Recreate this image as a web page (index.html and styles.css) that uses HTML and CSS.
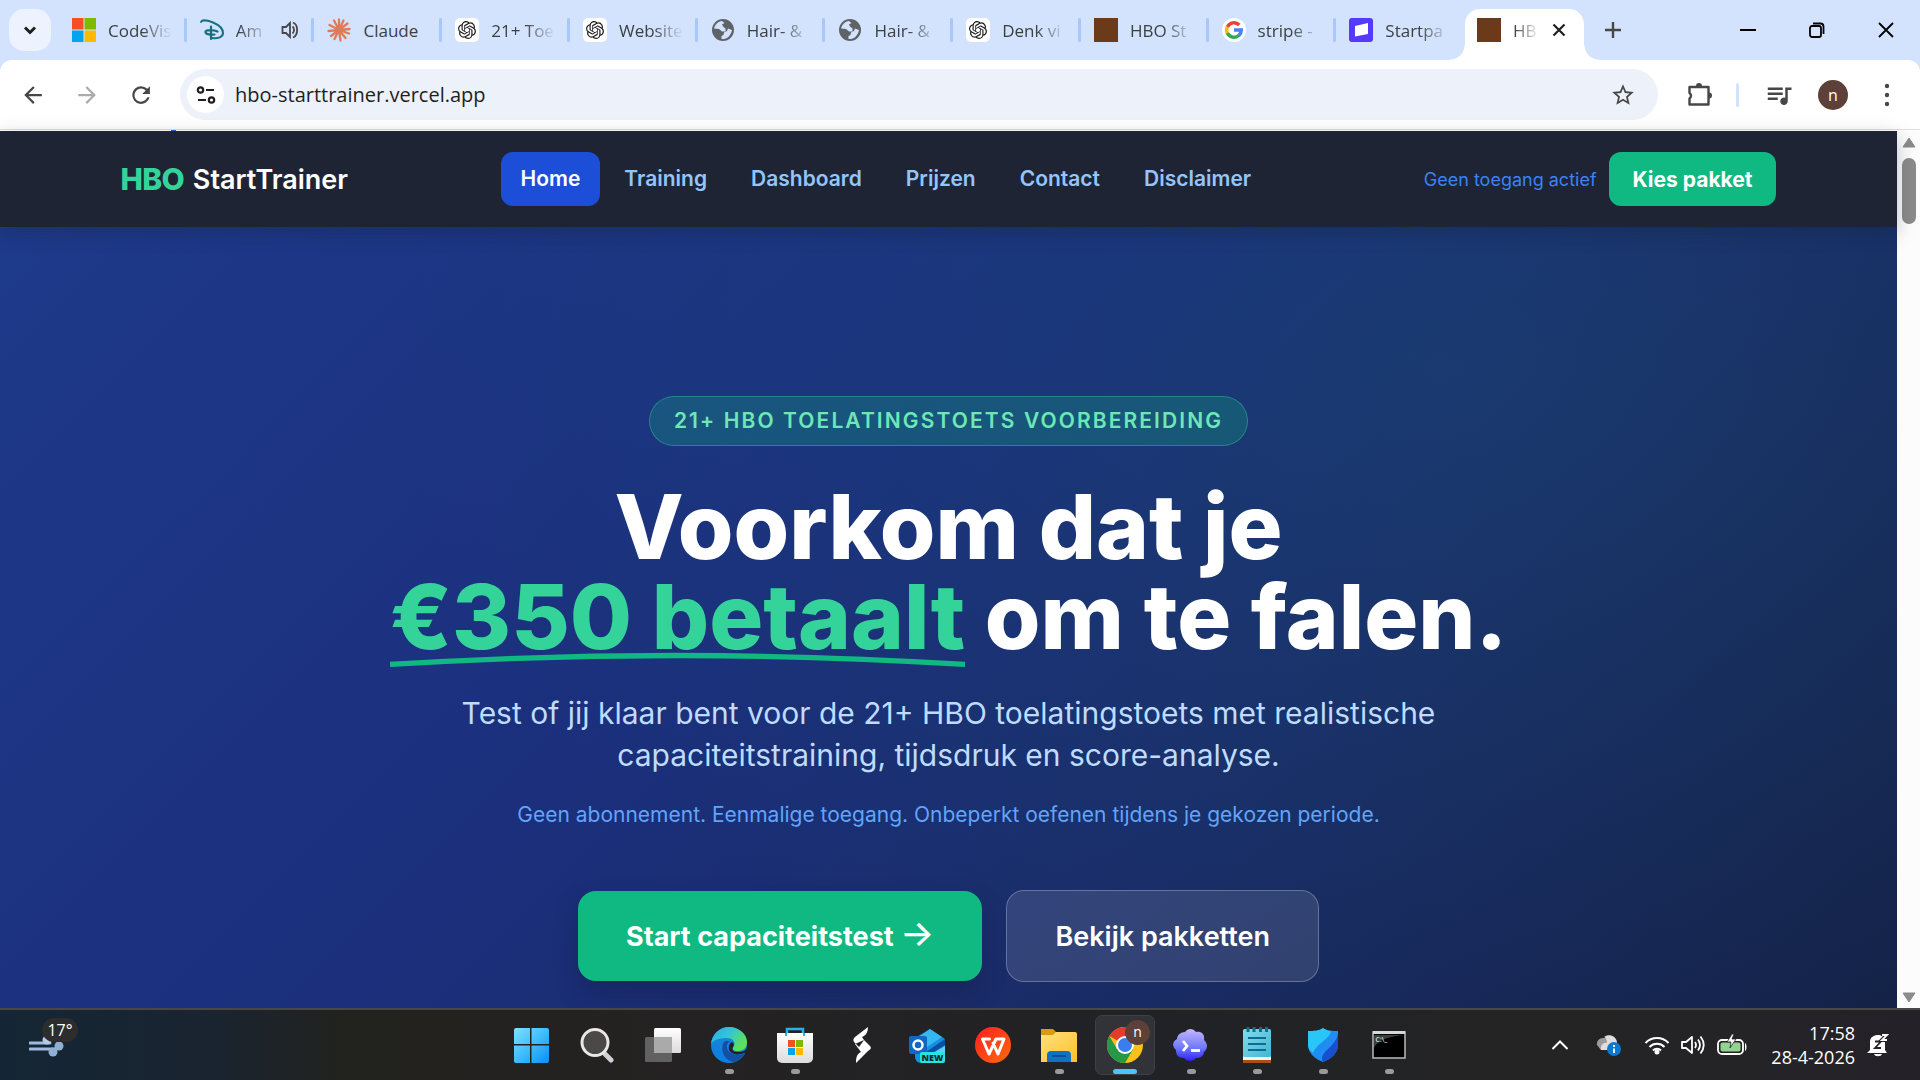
FILE: index.html
```html
<!DOCTYPE html>
<html lang="nl">
<head>
<meta charset="utf-8">
<title>HBO StartTrainer</title>
<link rel="stylesheet" href="styles.css">
</head>
<body>
<svg class="defs" width="0" height="0" aria-hidden="true">
  <defs>
    <symbol id="knot" viewBox="0 0 24 24"><path d="M22.28 9.82a5.98 5.98 0 0 0-.52-4.91 6.05 6.05 0 0 0-6.51-2.9A6.07 6.07 0 0 0 4.98 4.18a5.98 5.98 0 0 0-4 2.9 6.05 6.05 0 0 0 .74 7.1 5.98 5.98 0 0 0 .51 4.91 6.05 6.05 0 0 0 6.51 2.9A5.98 5.98 0 0 0 13.26 24a6.06 6.06 0 0 0 5.77-4.21 5.99 5.99 0 0 0 4-2.9 6.06 6.06 0 0 0-.75-7.07zm-9.02 12.61a4.48 4.48 0 0 1-2.88-1.04l.14-.08 4.78-2.76a.79.79 0 0 0 .39-.68v-6.74l2.02 1.17a.07.07 0 0 1 .04.05v5.58a4.5 4.5 0 0 1-4.49 4.5zM3.6 18.3a4.47 4.47 0 0 1-.53-3.01l.14.08 4.78 2.76a.77.77 0 0 0 .78 0l5.84-3.37v2.33a.08.08 0 0 1-.03.06L9.74 19.95a4.5 4.5 0 0 1-6.14-1.65zM2.34 7.9a4.49 4.49 0 0 1 2.37-1.98v5.68a.77.77 0 0 0 .39.68l5.81 3.35-2.02 1.17a.08.08 0 0 1-.07 0l-4.83-2.79A4.5 4.5 0 0 1 2.34 7.87zm16.6 3.86L13.1 8.36l2.02-1.16a.08.08 0 0 1 .07 0l4.83 2.79a4.49 4.49 0 0 1-.68 8.1v-5.68a.79.79 0 0 0-.4-.65zm2.01-3.02-.14-.09-4.77-2.78a.78.78 0 0 0-.79 0L9.41 9.23V6.9a.07.07 0 0 1 .03-.06l4.83-2.79a4.5 4.5 0 0 1 6.68 4.66zM8.31 12.86l-2.02-1.16a.08.08 0 0 1-.04-.06V6.07a4.5 4.5 0 0 1 7.38-3.45l-.14.08-4.78 2.76a.79.79 0 0 0-.39.68zm1.1-2.36 2.6-1.5 2.6 1.5v3l-2.6 1.5-2.6-1.5z"/></symbol>
    <symbol id="globe" viewBox="0 0 24 24"><circle cx="12" cy="12" r="11" fill="#5f6368"/><path fill="#d3e3fd" d="M11 3C7 3.400 4 6.500 3.100 10.500L8 11l3 2.500h3.500v-3L12 8.500l-1-2 2.500-1.500zM21 12l-4-1.500-1 2.500-3 1.500-.500 2.500-2 1v3c5 .500 9.500-3 10.500-9z"/></symbol>
    <linearGradient id="gWin" x1="0" y1="0" x2="1" y2="1"><stop offset="0" stop-color="#7fe0ff"/><stop offset=".5" stop-color="#3fbdfb"/><stop offset="1" stop-color="#0b8ff5"/></linearGradient>
    <linearGradient id="gEdge" x1="0" y1="0" x2="1" y2=".5"><stop offset="0" stop-color="#2aa8e8"/><stop offset=".5" stop-color="#33c5d8"/><stop offset="1" stop-color="#5fe255"/></linearGradient>
    <linearGradient id="gEdge2" x1="0" y1="0" x2="0" y2="1"><stop offset="0" stop-color="#1b86d8"/><stop offset="1" stop-color="#0a7fe0"/></linearGradient>
    <linearGradient id="gFold" x1="0" y1="0" x2="1" y2="1"><stop offset="0" stop-color="#ffe27a"/><stop offset="1" stop-color="#fbc02d"/></linearGradient>
    <linearGradient id="gCloud" x1="0" y1="0" x2="0" y2="1"><stop offset="0" stop-color="#c4b5fd"/><stop offset=".6" stop-color="#6d78fa"/><stop offset="1" stop-color="#3020f5"/></linearGradient>
    <linearGradient id="gWhite" x1="0" y1="0" x2="0" y2="1"><stop offset="0" stop-color="#fff"/><stop offset="1" stop-color="#dcdcdc"/></linearGradient>
    <linearGradient id="gWps" x1="0" y1="0" x2="1" y2="1"><stop offset="0" stop-color="#ff1d20"/><stop offset="1" stop-color="#ff6a0c"/></linearGradient>
    <linearGradient id="gNote" x1="0" y1="0" x2="1" y2="1"><stop offset="0" stop-color="#83dcec"/><stop offset="1" stop-color="#44b4d4"/></linearGradient>
  </defs>
</svg>

<header class="browser">
  <div class="tabstrip">
    <button class="tab-search" aria-label="Tabbladen zoeken"><svg width="20" height="20" viewBox="0 0 20 20"><path d="M5 7.500l5 5 5-5" fill="none" stroke="#1f1f1f" stroke-width="3"/></svg></button>
    <nav class="tabs" aria-label="Tabbladen">
      <a class="tab" href="#"><svg class="fav" viewBox="0 0 24 24"><path fill="#f25022" d="M0 0h11.500v11.500H0z"/><path fill="#7fba00" d="M12.500 0H24v11.500H12.500z"/><path fill="#00a4ef" d="M0 12.500h11.500V24H0z"/><path fill="#ffb900" d="M12.500 12.500H24V24H12.500z"/></svg><span class="tab-title">CodeVis</span></a>
      <a class="tab" href="#"><svg class="fav" viewBox="0 0 24 24" fill="none" stroke="#17707f" stroke-linecap="round"><path stroke-width="2" d="M1 4C2 1.500 8 2.500 13 4.500c6 2.500 10 6 10 10.500 0 4-5 6-11 5"/><path stroke-width="2.200" d="M11 8.500V21M17.500 13.500c-4-2-12-2-12 .500 0 2.500 6 3 9 2.500"/></svg><span class="tab-title">Am</span><svg class="audio" viewBox="0 0 18 18" fill="none" stroke="#474747" stroke-width="1.800"><path d="M1.500 6v6H5l4 4V2L5 6z"/><path d="M11.500 5.500c2 1.500 2 5.500 0 7M12 1.500c5.500 2 5.500 13 0 15"/></svg></a>
      <a class="tab" href="#"><svg class="fav" viewBox="0 0 24 24" stroke="#e07b5a" stroke-width="2.300" stroke-linecap="round"><path d="M12 12V1.500M12 12l4.500-9.500M12 12l8.500-6.500M12 12l10.500-1M12 12l10 3.500M12 12l6.500 8M12 12l1.500 10.500M12 12L7.500 21M12 12l-8 6M12 12l-10.500 1M12 12L2.500 7M12 12L7 2.500"/></svg><span class="tab-title whole">Claude</span></a>
      <a class="tab" href="#"><svg class="fav boxed"><use href="#knot"/></svg><span class="tab-title">21+ Toe</span></a>
      <a class="tab" href="#"><svg class="fav boxed"><use href="#knot"/></svg><span class="tab-title">Website</span></a>
      <a class="tab" href="#"><svg class="fav"><use href="#globe"/></svg><span class="tab-title">Hair- &amp;</span></a>
      <a class="tab" href="#"><svg class="fav"><use href="#globe"/></svg><span class="tab-title">Hair- &amp;</span></a>
      <a class="tab" href="#"><svg class="fav boxed"><use href="#knot"/></svg><span class="tab-title">Denk vi</span></a>
      <a class="tab" href="#"><span class="fav brown"></span><span class="tab-title">HBO St</span></a>
      <a class="tab" href="#"><svg class="fav" viewBox="0 0 24 24"><circle cx="12" cy="12" r="12" fill="#fff"/><g fill="none" stroke-width="3.500"><path stroke="#ea4335" d="M5.400 9A7.300 7.300 0 0 1 17.300 7"/><path stroke="#fbbc05" d="M5.400 15.200a7.300 7.300 0 0 1 0-6.400"/><path stroke="#34a853" d="M17 17.300A7.300 7.300 0 0 1 5.400 15.100"/><path stroke="#4285f4" d="M12 12h7.300a7.300 7.300 0 0 1-2.400 5.400"/></g></svg><span class="tab-title">stripe -</span></a>
      <a class="tab" href="#"><svg class="fav" viewBox="0 0 24 24"><rect width="24" height="24" rx="3" fill="#533afd"/><path fill="#fff" d="M6 8l13-3v11L6 18.500z"/></svg><span class="tab-title">Startpa</span></a>
      <a class="tab active" href="#" aria-current="page"><span class="fav brown"></span><span class="tab-title">HB</span><svg class="close" viewBox="0 0 14 14"><path d="M1.500 1.500l11 11M12.500 1.500l-11 11" stroke="#1f1f1f" stroke-width="2.200"/></svg></a>
    </nav>
    <button class="new-tab" aria-label="Nieuw tabblad"><svg width="18" height="18" viewBox="0 0 18 18"><path d="M9 1v16M1 9h16" stroke="#474747" stroke-width="2.400"/></svg></button>
    <div class="window-controls">
      <button aria-label="Minimaliseren"><svg width="16" height="16" viewBox="0 0 16 16"><path d="M0 8h16" stroke="#000" stroke-width="2"/></svg></button>
      <button aria-label="Herstellen"><svg width="16" height="16" viewBox="0 0 16 16" fill="none" stroke="#000" stroke-width="1.800"><rect x="1" y="4" width="11" height="11" rx="2"/><path d="M4 1.500h7.500a3 3 0 0 1 3 3V12"/></svg></button>
      <button aria-label="Sluiten"><svg width="16" height="16" viewBox="0 0 16 16"><path d="M1 1l14 14M15 1L1 15" stroke="#000" stroke-width="1.800"/></svg></button>
    </div>
  </div>
  <div class="toolbar">
    <div class="nav-buttons">
      <button aria-label="Terug"><svg width="30" height="30" viewBox="0 0 24 24"><path fill="#474747" d="M20 11H7.830l5.590-5.590L12 4l-8 8 8 8 1.410-1.410L7.830 13H20z" transform="translate(1.500 1.500) scale(.88)"/></svg></button>
      <button aria-label="Vooruit"><svg width="30" height="30" viewBox="0 0 24 24"><path fill="#ababab" d="M12 4l-1.410 1.410L16.170 11H4v2h12.170l-5.580 5.590L12 20l8-8z" transform="translate(1.500 1.500) scale(.88)"/></svg></button>
      <button aria-label="Opnieuw laden"><svg width="30" height="30" viewBox="0 0 24 24"><path fill="#474747" d="M17.650 6.350A7.960 7.960 0 0 0 12 4a8 8 0 1 0 7.730 10h-2.080A6 6 0 1 1 12 6c1.660 0 3.140.690 4.220 1.780L13 11h7V4z" transform="translate(1.500 1.500) scale(.88)"/></svg></button>
    </div>
    <form class="omnibox">
      <button class="site-info" type="button" aria-label="Sitegegevens"><svg width="20" height="20" viewBox="0 0 20 20" fill="none" stroke="#1f1f1f" stroke-width="2.200"><circle cx="4.500" cy="5" r="2.700"/><path d="M10 5h8M2 15h8"/><circle cx="15.500" cy="15" r="2.700"/></svg></button>
      <input type="text" aria-label="Adresbalk" value="hbo-starttrainer.vercel.app">
      <button class="star" type="button" aria-label="Bladwijzer"><svg width="26" height="26" viewBox="0 0 24 24"><path fill="#474747" d="M22 9.240l-7.190-.620L12 2 9.190 8.630 2 9.240l5.460 4.730L5.820 21 12 17.270 18.180 21l-1.630-7.030zM12 15.400l-3.760 2.270 1-4.280-3.320-2.880 4.380-.380L12 6.100l1.710 4.040 4.380.380-3.320 2.880 1 4.280z"/></svg></button>
    </form>
    <div class="actions">
      <button aria-label="Extensies"><svg width="30" height="30" viewBox="0 0 30 30"><path d="M5.500 7h19v17.500h-19v-6a3.300 3.300 0 0 0 0-5.500z" fill="none" stroke="#474747" stroke-width="2.400" stroke-linejoin="round"/><path fill="#474747" d="M12 6a3 3 0 0 1 6 0zM25 12.500a3 3 0 0 1 0 6z"/></svg></button>
      <span class="divider"></span>
      <button aria-label="Media"><svg width="30" height="30" viewBox="0 0 24 24"><path fill="#474747" d="M15 6H3v2h12zm0 4H3v2h12zM3 16h8v-2H3zM17 6v8.180A3 3 0 1 0 19 17V8h3V6z"/></svg></button>
      <button class="avatar" aria-label="Profiel">n</button>
      <button class="menu" aria-label="Menu"><svg width="24" height="24" viewBox="0 0 24 24"><g fill="#474747"><circle cx="12" cy="3" r="2.200"/><circle cx="12" cy="12" r="2.200"/><circle cx="12" cy="21" r="2.200"/></g></svg></button>
    </div>
  </div>
</header>

<div class="viewport">
  <div class="page">
    <header class="site-header">
      <div class="container">
        <a class="logo" href="#"><strong>HBO</strong><span>StartTrainer</span></a>
        <nav class="site-nav">
          <a class="current" href="#">Home</a><a href="#">Training</a><a href="#">Dashboard</a><a href="#">Prijzen</a><a href="#">Contact</a><a href="#">Disclaimer</a>
        </nav>
        <div class="account"><span>Geen toegang actief</span><button>Kies pakket</button></div>
      </div>
    </header>
    <main class="hero">
      <p class="badge">21+ HBO TOELATINGSTOETS VOORBEREIDING</p>
      <h1>Voorkom dat je<br><span class="marked">€350 betaalt<svg viewBox="0 0 300 12" preserveAspectRatio="none"><path d="M0 9Q150-3 300 9" fill="none" stroke="#10b981" stroke-width="3.500"/></svg></span> om te falen.</h1>
      <p class="lead">Test of jij klaar bent voor de 21+ HBO toelatingstoets met realistische capaciteitstraining, tijdsdruk en score-analyse.</p>
      <p class="note">Geen abonnement. Eenmalige toegang. Onbeperkt oefenen tijdens je gekozen periode.</p>
      <div class="cta"><button class="primary">Start capaciteitstest <span class="arrow">→</span></button><button class="secondary">Bekijk pakketten</button></div>
    </main>
  </div>
  <div class="scrollbar" aria-hidden="true">
    <svg width="14" height="11" viewBox="0 0 14 11"><path d="M7 1L13 10H1z" fill="#8b8b8b" stroke="#8b8b8b" stroke-linejoin="round"/></svg>
    <span class="thumb"></span>
    <svg class="down" width="14" height="11" viewBox="0 0 14 11"><path d="M1 1h12L7 10z" fill="#8b8b8b" stroke="#8b8b8b" stroke-linejoin="round"/></svg>
  </div>
</div>

<footer class="taskbar">
  <button class="weather" aria-label="Weer"><svg width="36" height="24" viewBox="0 0 36 24"><path d="M1 8h20M1 14h26" stroke="#9db9dc" stroke-width="3" stroke-linecap="round"/><circle cx="18" cy="5" r="4.500" fill="#b5c9e4"/><circle cx="30" cy="11" r="4.500" fill="#8fb0d2"/><circle cx="24" cy="17" r="4.500" fill="#8fb0d2"/></svg><span>17°</span></button>
  <div class="apps">
    <button aria-label="Start"><svg viewBox="0 0 36 36" fill="url(#gWin)"><path d="M1 3a2 2 0 0 1 2-2h14v16H1zM18.500 1H34a2 2 0 0 1 2 2v14H18.500zM1 18.500h16V36H3a2 2 0 0 1-2-2zM18.500 18.500H36V34a2 2 0 0 1-2 2H18.500z"/></svg></button>
    <button aria-label="Zoeken"><svg viewBox="0 0 36 36"><path d="M24 25l8 8" stroke="#cfd3d6" stroke-width="5" stroke-linecap="round"/><circle cx="16" cy="15.500" r="13" fill="#4b4847" stroke="#e8e8e8" stroke-width="3"/></svg></button>
    <button aria-label="Taakweergave"><svg viewBox="0 0 36 36"><rect x="9" y="1" width="27" height="25" rx="1.500" fill="url(#gWhite)"/><rect y="10" width="27" height="25" rx="1.500" fill="#6c6c6c" opacity=".85"/><path d="M9 10h18v16H9z" fill="#aaa"/></svg></button>
    <button class="open" aria-label="Edge"><svg viewBox="0 0 36 36"><circle cx="18" cy="18" r="18" fill="url(#gEdge2)"/><path fill="url(#gEdge)" d="M0 17C1 7 9 0 18 0c10 0 18 7 18 15 0 7-5 9-9 9-5 0-6-2-4.500-4 3-5-1-9-6.500-9C9 11 2 13 0 17z"/><path fill="#134fa3" d="M12 17c-3 9 4 18 12 18 5-2 8-5 9.500-9-10 5-19-1-17.500-8 .500-2 2-3 3-3.500-3-1.500-6-.500-7 2.500z"/><path fill="#232222" d="M22 20c-1.500 3 .500 5 5 5 4 0 7-1 9-4v6l-3-1c-9 4-17-1-15-7 .500-2 2-4 3-4 2 1 2.500 3 1 5z"/></svg></button>
    <button class="open" aria-label="Store"><svg viewBox="0 0 36 36"><path d="M10 9V2h16v7" fill="none" stroke="#28b2e8" stroke-width="2.500"/><path d="M0 6h36v25a5 5 0 0 1-5 5H5a5 5 0 0 1-5-5z" fill="url(#gWhite)"/><path d="M9 9V6M27 9V6" stroke="#28b2e8" stroke-width="2"/><path fill="#f25022" d="M11 13h7v7h-7z"/><path fill="#7fba00" d="M19 13h7v7h-7z"/><path fill="#00a4ef" d="M11 21h7v7h-7z"/><path fill="#ffb900" d="M19 21h7v7h-7z"/></svg></button>
    <button aria-label="S-app"><svg viewBox="0 0 36 36" fill="#fff"><path d="M25 0L12 10c-3 3-1 5 0 6l4 4 5-7-2-3c3-1 6-4 6-10zM21 13l6 6c2 2 0 4-2 5L13 36c0-6 1-9 5-11l-6-8z"/></svg></button>
    <button aria-label="Outlook"><svg viewBox="0 0 36 36"><path fill="#1490df" d="M6 11L21 2l15 10v18a6 6 0 0 1-6 6H12a6 6 0 0 1-6-6z"/><path fill="#35b8f1" d="M8 11L21 2l12 8-15 10z"/><path fill="#0b4fa5" d="M36 12L17 25v5l19-12z"/><path fill="#5fd0f5" d="M14 32l22-13v11z"/><rect y="9" width="18" height="18" rx="2" fill="#1267c5"/><circle cx="9" cy="18" r="4.500" fill="none" stroke="#fff" stroke-width="2.500"/><rect x="11" y="25" width="25" height="11" rx="2" fill="#29e3df"/><text x="23.500" y="34" text-anchor="middle" font-size="9" font-weight="800" fill="#0b2a33">NEW</text></svg></button>
    <button aria-label="WPS"><svg viewBox="0 0 36 36"><circle cx="18" cy="18" r="18" fill="url(#gWps)"/><path d="M14.500 12H7.500l6.500 15L21 12h8l-6 15-5-11" fill="none" stroke="#fff" stroke-width="3" stroke-linejoin="round" stroke-linecap="round"/></svg></button>
    <button class="open" aria-label="Verkenner"><svg viewBox="0 0 36 36"><path fill="#d99a0b" d="M0 2h12l3 3v4H0z"/><path fill="url(#gFold)" d="M0 8h12l3-3h19a2 2 0 0 1 2 2v28H0z"/><path fill="#0f72c4" d="M6 35v-7a4 4 0 0 1 4-4h16a4 4 0 0 1 4 4v7z"/><path d="M11 29h14" stroke="#07467f" stroke-width="1.500"/></svg></button>
    <button class="open focused" aria-label="Chrome"><svg viewBox="0 0 36 36"><circle cx="18" cy="18" r="18" fill="#fbc116"/><path fill="#e33b2e" d="M18 18L2.400 9A18 18 0 0 1 33.600 9z"/><path fill="#279847" d="M2.400 9A18 18 0 0 0 18 36l8-13.500-8-4.500-8 4z"/><circle cx="18" cy="18" r="9" fill="#fff"/><circle cx="18" cy="18" r="7" fill="#3b7ded"/></svg><span class="profile">n</span></button>
    <button class="open" aria-label="Terminal-app"><svg viewBox="0 0 36 36"><g fill="url(#gCloud)"><path d="M12 5c3-4 8-4 11 0 6-1 9 3 8 8 4 4 4 8 0 12-1 5-4 6-8 6-3 4-9 4-12 0-6 0-8-3-8-8-4-4-4-8 1-11 0-4 4-7 8-7z"/></g><path d="M10 14l4 5-4 5" fill="none" stroke="#fff" stroke-width="2.800"/><path d="M18 23.500h9" stroke="#fff" stroke-width="2.800"/></svg></button>
    <button class="open" aria-label="Kladblok"><svg viewBox="0 0 36 36"><path fill="#a9500f" d="M4 31h28v5H4z"/><path fill="#f1f1f1" d="M4 29h28v4H4z"/><rect x="4" y="2" width="28" height="28" rx="1.500" fill="url(#gNote)"/><path d="M9 0v5M15 0v5M21.500 0v5M27.500 0v5" stroke="#0d6f92" stroke-width="3"/><path d="M9 11h18M9 17h18M9 23h18" stroke="#0e6c8e" stroke-width="2"/></svg></button>
    <button class="open" aria-label="Beveiliging"><svg viewBox="0 0 36 36"><path fill="#1f8df2" d="M18 1c4 3 9 3 15 3v14c0 8-7 14-15 17C10 32 3 26 3 18V4c6 0 11 0 15-3z"/><path fill="#2bc6f8" d="M18 1c3 2 5 3 8 3-1 8-14 12-18 22-3-2-5-5-5-8V4c6 0 11 0 15-3z"/><path fill="#164fd0" d="M33 7v11c0 8-7 14-15 17-5-10 12-14 15-28z"/></svg></button>
    <button class="open" aria-label="Opdrachtprompt"><svg viewBox="0 0 36 36"><rect x="2" y="5" width="32" height="26" fill="#000" stroke="#b8bcc0" stroke-width="1.500"/><path fill="#d5d8da" d="M2 4h32v3H2z"/><path fill="#3d3d3d" d="M3 8h30c-10 1-25 3-30 13z"/><text x="4.500" y="14.500" font-size="7" fill="#fff">C:\_</text></svg></button>
  </div>
  <div class="tray">
    <button aria-label="Verborgen pictogrammen"><svg width="18" height="10" viewBox="0 0 18 10"><path d="M1.500 9L9 1.500 16.500 9" fill="none" stroke="#fff" stroke-width="2"/></svg></button>
    <button class="cloud" aria-label="OneDrive"><svg width="26" height="24" viewBox="0 0 26 24"><path fill="#9c9c9c" d="M1 12a6 6 0 0 1 6-7h5v12H5z"/><path fill="#dedede" d="M5 17c-1-5 3-8 6-7 0-4-2-6-3-6 5-4 12-1 13 5v8z"/><circle cx="18" cy="16" r="7" fill="#0b78d4"/><path d="M18 12v2M18 15.500V20" stroke="#fff" stroke-width="1.800"/></svg></button>
    <button class="net" aria-label="Netwerk, volume, batterij">
      <svg width="26" height="20" viewBox="0 0 26 20" fill="none" stroke="#fff" stroke-width="2"><path d="M1.500 8a16 16 0 0 1 23 0M5.500 12a10.500 10.500 0 0 1 15 0M9 15.500a5.500 5.500 0 0 1 8 0"/><circle cx="13" cy="17" r="1.500" fill="#fff"/></svg>
      <svg width="26" height="22" viewBox="0 0 26 22" fill="none" stroke="#fff" stroke-width="1.800"><path d="M2 8v6h4l6 5V3L6 8z" stroke-linejoin="round"/><path d="M15 8q2 3 0 6M18 5.500q4 5.500 0 11M20.500 2.500q6.500 8.500 0 17"/></svg>
      <svg width="32" height="22" viewBox="0 0 32 22"><rect x="2" y="6" width="25" height="14" rx="4" fill="#232323" stroke="#fff" stroke-width="1.800"/><rect x="4.500" y="8.500" width="20" height="9" rx="2" fill="#92d392"/><path d="M29 9c2 1 2 7 0 8z" fill="#fff"/><path d="M16 0l-5 8h4l-1 6 6-9h-4l2-5z" fill="#fff" stroke="#232323" stroke-width=".8"/></svg>
    </button>
    <button class="clock"><time>17:58</time><span>28-4-2026</span></button>
    <button aria-label="Meldingen"><svg width="22" height="24" viewBox="0 0 22 24"><path fill="#fff" d="M3 17V9c0-5 4-7 8-7s7 2 7 7v8l2 3H0zM7 21h8c-1 3-7 3-8 0z"/><path d="M8 8.500h6l-6 6.500h6" fill="none" stroke="#242228" stroke-width="1.800"/><path d="M14 1h7l-6 6h6" fill="none" stroke="#242228" stroke-width="4"/><path d="M15 2h5l-5 5h5" fill="none" stroke="#fff" stroke-width="1.800"/></svg></button>
  </div>
</footer>
</body>
</html>
```
FILE: styles.css
```css
* { box-sizing: border-box; }
body {
  margin: 0;
  height: 100vh;
  display: flex;
  flex-direction: column;
  overflow: hidden;
  font-family: Inter, sans-serif;
}
button { font: inherit; color: inherit; border: 0; padding: 0; background: none; }
a { color: inherit; text-decoration: none; }
p, h1 { margin: 0; }
.defs { position: absolute; }

/* Browser window */
.browser { background: #d3e3fd; font-family: "Open Sans", "Noto Sans", sans-serif; }
.tabstrip { display: flex; align-items: center; height: 60px; padding-left: 9px; }
.tab-search { display: grid; flex: none; place-items: center; width: 42px; height: 42px; border-radius: 15px; background: #ecf2fe; margin-right: 9px; }
.tabs { display: flex; flex: 1; min-width: 0; height: 51px; align-self: flex-end; }
.tab {
  position: relative;
  display: flex;
  flex: 1 1 0;
  min-width: 0;
  align-items: center;
  gap: 12px;
  height: 42px;
  padding: 0 16px 0 12px;
  font-size: 17px;
  color: #3c4043;
}
.tab:not(.active)::after { content: ""; position: absolute; right: 1px; top: 9px; width: 3px; height: 24px; border-radius: 2px; background: #a8c7fa; }
.tab:nth-last-child(2)::after { display: none; }
.fav { flex: none; width: 24px; height: 24px; }
.boxed { padding: 3px; border-radius: 5px; background: #fff; fill: #1f1f1f; }
.brown { background: #6b3a1a; }
.tab-title { flex: 1; min-width: 0; overflow: hidden; white-space: nowrap; mask-image: linear-gradient(90deg, #000 calc(100% - 30px), transparent 100%); }
.tab-title.whole { mask-image: none; }
.audio { flex: none; width: 18px; height: 18px; }
.tab.active { flex: none; width: 119px; height: 51px; margin-right: 8px; padding: 0 18px 9px 12px; border-radius: 15px 15px 0 0; background: #fff; color: #1f1f1f; }
.tab.active::before, .tab.active::after { content: ""; position: absolute; bottom: 0; width: 15px; height: 15px; }
.tab.active::before { right: 100%; background: radial-gradient(circle at 0 0, transparent 14px, #fff 15px); }
.tab.active::after { left: 100%; background: radial-gradient(circle at 100% 0, transparent 14px, #fff 15px); }
.close { flex: none; width: 14px; height: 14px; }
.new-tab { display: grid; flex: none; place-items: center; width: 42px; height: 42px; margin-right: 79px; }
.window-controls { display: flex; flex: none; align-self: stretch; }
.window-controls button { display: grid; place-items: center; width: 69px; }
.toolbar {
  display: flex;
  align-items: center;
  height: 71px;
  padding: 9px 6px 11px;
  border-radius: 12px 12px 0 0;
  background:
    linear-gradient(#dedede, #dedede) 0 69px / 100% 1px no-repeat,
    linear-gradient(#2563eb, #2563eb) 171px 70px / 5px 1px no-repeat,
    #fff;
}
.nav-buttons { display: flex; }
.nav-buttons button { display: grid; place-items: center; width: 54px; height: 51px; }
.omnibox { display: flex; flex: 1; align-items: center; height: 51px; margin-left: 12px; padding: 0 22px 0 7px; border-radius: 26px; background: #ecf1fa; }
.site-info { display: grid; place-items: center; width: 37px; height: 37px; border-radius: 50%; background: #fff; }
.omnibox input { flex: 1; height: 37px; margin-left: 11px; padding: 0; border: 0; outline: 0; background: none; color: #1f1f1f; font: 20px "Open Sans", "Noto Sans", sans-serif; }
.star, .star svg { display: block; }
.actions { display: flex; align-items: center; margin-left: 26px; }
.actions button { display: grid; place-items: center; width: 30px; height: 30px; }
.divider { width: 3px; height: 24px; margin: 0 25px 0 22px; border-radius: 2px; background: #d3e3fd; }
.actions .avatar { margin: 0 24px; border-radius: 50%; background: #5d4037; color: #fff; font-size: 16px; line-height: 30px; }
.actions .menu { margin-right: 12px; }

/* Site */
.viewport { display: flex; flex: 1; min-height: 0; }
.page { display: flex; flex: 1; flex-direction: column; min-width: 0; }
.site-header { position: relative; background: #1e2433; box-shadow: 0 6px 18px rgba(15, 23, 42, .25); }
.container { display: flex; align-items: center; justify-content: space-between; max-width: 1728px; height: 96px; margin: 0 auto; padding: 0 36px; }
.logo { display: flex; align-items: center; gap: 9px; color: #fff; font-size: 27px; font-weight: 600; }
.logo strong { color: #34d399; font-size: 30px; font-weight: 800; letter-spacing: -.025em; }
.site-nav { display: flex; gap: 4px; color: #93c5fd; font-size: 21px; font-weight: 600; line-height: 54px; }
.site-nav a { padding: 0 20px; border-radius: 12px; }
.site-nav .current { background: #1d4ed8; color: #fff; }
.account { display: flex; align-items: center; gap: 12px; color: #3b82f6; font-size: 18px; }
.account button { height: 54px; padding: 0 24px; border-radius: 12px; background: #10b981; color: #fff; font-size: 21px; font-weight: 700; }
.hero {
  display: flex;
  flex: 1;
  flex-direction: column;
  align-items: center;
  min-height: 0;
  padding: 169px 36px 0;
  text-align: center;
  background:
    radial-gradient(ellipse 55% 90% at 76% 18%, rgba(24, 110, 120, .2), transparent),
    linear-gradient(135deg, #1e3a8a 0%, #1b2f7c 42%, #1a2c6a 65%, #142247 100%);
}
.badge { padding: 0 24px; border: 1px solid rgba(52, 211, 153, .4); border-radius: 25px; background: rgba(16, 185, 129, .25); color: #6ee7b7; font-size: 21px; font-weight: 600; line-height: 48px; letter-spacing: .1em; }
h1 { margin-top: 36px; color: #fff; font-size: 90px; font-weight: 800; line-height: 90px; }
.marked { position: relative; color: #34d399; }
.marked svg { position: absolute; left: 0; bottom: 2px; width: 100%; height: 18px; }
.lead { max-width: 1008px; margin-top: 30px; color: #bfdbfe; font-size: 30px; line-height: 42px; }
.note { margin-top: 24px; color: #60a5fa; font-size: 21px; line-height: 30px; }
.cta { display: flex; align-items: center; gap: 24px; margin-top: 60px; color: #fff; font-size: 27px; font-weight: 700; }
.primary { height: 90px; padding: 0 48px; border-radius: 18px; background: #10b981; box-shadow: 0 12px 24px rgba(15, 23, 60, .3); }
.arrow { font-size: 36px; font-weight: 500; line-height: 24px; }
.secondary { height: 92px; padding: 0 48px; border: 1px solid rgba(255, 255, 255, .25); border-radius: 18px; background: rgba(255, 255, 255, .11); font-weight: 600; }
.scrollbar { display: flex; flex-direction: column; align-items: center; width: 23px; padding: 6px 0 5px; background: #fcfcfc; }
.thumb { width: 14px; height: 66px; margin-top: 10px; border-radius: 7px; background: #8b8b8b; }
.down { margin-top: auto; }

/* Taskbar */
.taskbar {
  display: grid;
  grid-template-columns: 1fr auto 1fr;
  align-items: center;
  height: 72px;
  border-top: 2px solid #484848;
  background: linear-gradient(90deg, #142635 0, #1a2430 11%, #22221e 18%, #242222 35%, #212226 60%, #242424 80%, #242228 100%);
  color: #fff;
  font-family: "Open Sans", "Noto Sans", sans-serif;
}
.weather { position: relative; width: 60px; height: 60px; margin-left: 24px; }
.weather svg { position: absolute; left: 5px; top: 20px; }
.weather span { position: absolute; left: 18px; top: 3px; width: 36px; border-radius: 12px; background: #2d2d2d; font-size: 16px; line-height: 24px; }
.apps { display: flex; gap: 6px; }
.apps button { position: relative; display: grid; place-items: center; width: 60px; height: 60px; border-radius: 7px; }
.apps svg { width: 36px; height: 36px; }
.open::after { content: ""; position: absolute; bottom: 1px; width: 9px; height: 5px; border-radius: 3px; background: #9a9a9a; }
.apps .focused { background: #323338; border: 1px solid #3f4044; }
.focused::after { bottom: 0; width: 24px; background: #4cc2ff; }
.profile { position: absolute; right: 4px; top: 4px; width: 25px; height: 25px; border-radius: 50%; background: #5d4037; font-size: 14px; line-height: 23px; }
.tray { display: flex; align-items: center; justify-content: flex-end; padding-right: 31px; }
.tray button { display: flex; align-items: center; }
.cloud { margin: 0 22px 0 27px; }
.net { gap: 10px; }
.tray .clock { display: block; margin: 0 12px 0 23px; text-align: right; font-size: 18px; line-height: 24px; }
.clock time, .clock span { display: block; }
```
